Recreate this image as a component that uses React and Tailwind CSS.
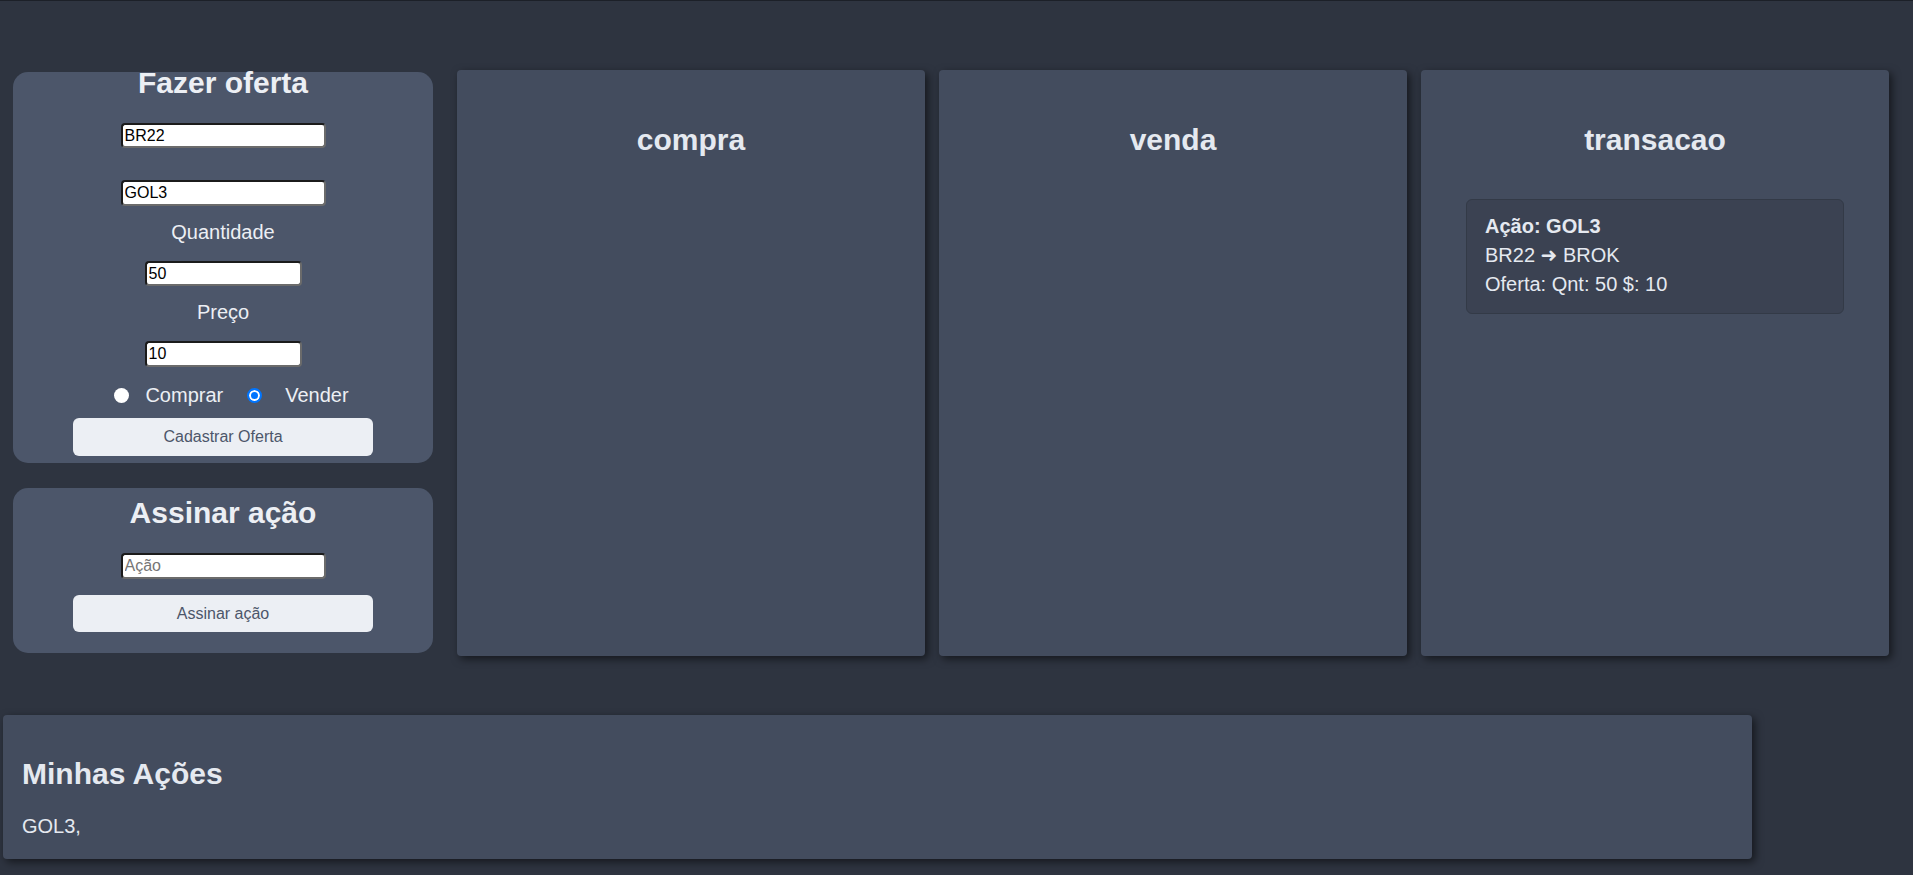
import React, { useState } from "react";

const inputCls =
    "bg-white text-black text-base leading-none px-[2px] rounded-[4px] border-2 border-t-[#1b1b1b] border-l-[#1b1b1b] border-b-[#6b6b6b] border-r-[#6b6b6b] outline-none placeholder:text-[#767676]";

const radioCls =
    "appearance-none w-[15px] h-[15px] rounded-full bg-white border-0 checked:border-2 checked:border-[#0075ff] checked:bg-[#0075ff] checked:shadow-[inset_0_0_0_2px_white]";

function Coluna({ titulo, children }) {
    return (
        <div className="w-[468px] h-[586px] bg-[#434c5e] rounded-[4px] shadow-[3px_3px_8px_rgba(0,0,0,0.55)] pt-[52px]">
            <h2 className="text-3xl leading-9 font-bold text-center text-[#e5e9f0]">{titulo}</h2>
            {children}
        </div>
    );
}

export default function App() {
    const [tipo, setTipo] = useState("vender");
    const [corretora, setCorretora] = useState("BR22");
    const [acao, setAcao] = useState("GOL3");
    const [quantidade, setQuantidade] = useState("50");
    const [preco, setPreco] = useState("10");
    const [assinar, setAssinar] = useState("");

    return (
        <div className="min-h-screen bg-[#2e3440] border-t border-[#1c2028] font-['Liberation_Sans',Arial,sans-serif] text-[#eceff4]">
            <div className="flex pt-[69px]">
                {/* formularios */}
                <div className="ml-[13px] w-[420px] mt-[2px] flex flex-col gap-[25px]">
                    <div className="h-[391px] bg-[#4c566a] rounded-[15px] flex flex-col items-center">
                        <h1 className="-mt-[7px] text-3xl leading-9 font-bold">Fazer oferta</h1>
                        <input
                            className={`${inputCls} mt-[22px] w-[205px] h-[25px]`}
                            value={corretora}
                            onChange={(e) => setCorretora(e.target.value)}
                        />
                        <input
                            className={`${inputCls} mt-[32px] w-[205px] h-[26px]`}
                            value={acao}
                            onChange={(e) => setAcao(e.target.value)}
                        />
                        <label className="mt-[12px] text-xl leading-7">Quantidade</label>
                        <input
                            className={`${inputCls} mt-[15px] w-[157px] h-[25px]`}
                            value={quantidade}
                            onChange={(e) => setQuantidade(e.target.value)}
                        />
                        <label className="mt-[12px] text-xl leading-7">Preço</label>
                        <input
                            className={`${inputCls} mt-[15px] w-[157px] h-[26px]`}
                            value={preco}
                            onChange={(e) => setPreco(e.target.value)}
                        />
                        <div className="mt-[14px] h-[28px] flex items-center pl-[17px] text-xl">
                            <input
                                type="radio"
                                name="tipo"
                                className={radioCls}
                                checked={tipo === "comprar"}
                                onChange={() => setTipo("comprar")}
                            />
                            <span className="ml-[16px]">Comprar</span>
                            <input
                                type="radio"
                                name="tipo"
                                className={`${radioCls} ml-[24px]`}
                                checked={tipo === "vender"}
                                onChange={() => setTipo("vender")}
                            />
                            <span className="ml-[23px]">Vender</span>
                        </div>
                        <button className="mt-[9px] w-[300px] h-[38px] bg-[#eceff4] text-[#4c566a] text-base rounded-[6px]">
                            Cadastrar Oferta
                        </button>
                    </div>

                    <div className="h-[165px] bg-[#4c566a] rounded-[15px] flex flex-col items-center">
                        <h1 className="mt-[7px] text-3xl leading-9 font-bold">Assinar ação</h1>
                        <input
                            className={`${inputCls} mt-[22px] w-[205px] h-[26px]`}
                            placeholder="Ação"
                            value={assinar}
                            onChange={(e) => setAssinar(e.target.value)}
                        />
                        <button className="mt-[16px] w-[300px] h-[37px] bg-[#eceff4] text-[#4c566a] text-base rounded-[6px]">
                            Assinar ação
                        </button>
                    </div>
                </div>

                {/* colunas */}
                <div className="ml-[24px] flex gap-[14px]">
                    <Coluna titulo="compra" />
                    <Coluna titulo="venda" />
                    <Coluna titulo="transacao">
                        <div className="mx-[45px] mt-[41px] bg-[#3b4252] border border-[#333a47] rounded-[6px] pl-[18px] pt-[12px] pb-[14px] text-xl leading-[29px] text-[#e5e9f0]">
                            <p className="font-bold">Ação: GOL3</p>
                            <p>
                                BR22 <span className="font-['DejaVu_Sans'] font-bold">➜</span> BROK
                            </p>
                            <p>Oferta: Qnt: 50 $: 10</p>
                        </div>
                    </Coluna>
                </div>
            </div>

            {/* minhas acoes */}
            <div className="mt-[59px] ml-[3px] w-[1749px] h-[144px] bg-[#434c5e] rounded-[4px] shadow-[3px_3px_8px_rgba(0,0,0,0.55)] pl-[19px] pt-[41px]">
                <h2 className="text-3xl leading-9 font-bold text-[#e5e9f0]">Minhas Ações</h2>
                <p className="mt-[20px] text-xl leading-7 text-[#e5e9f0]">GOL3,</p>
            </div>
        </div>
    );
}
